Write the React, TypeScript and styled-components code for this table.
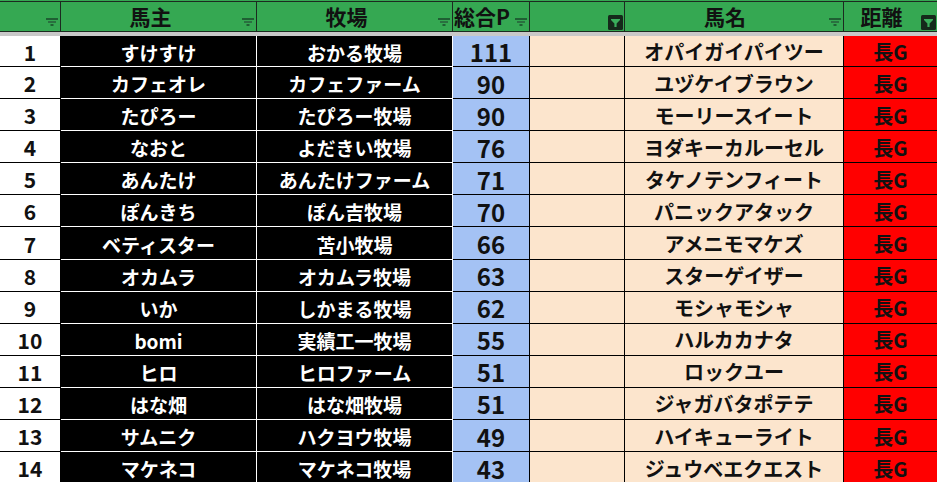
import styled, { createGlobalStyle, css } from "styled-components";

const GlobalStyle = createGlobalStyle`
  html, body {
    margin: 0;
    padding: 0;
    background: #ffffff;
    overflow: hidden;
  }
  body {
    font-family: "Noto Sans CJK JP", "Noto Sans", sans-serif;
  }
`;

type Tone = "num" | "dark" | "blue" | "peach" | "red";

interface RowData {
  owner: string;
  farm: string;
  points: number;
  horse: string;
}

const rows: RowData[] = [
  { owner: "すけすけ", farm: "おかる牧場", points: 111, horse: "オパイガイパイツー" },
  { owner: "カフェオレ", farm: "カフェファーム", points: 90, horse: "ユヅケイブラウン" },
  { owner: "たぴろー", farm: "たぴろー牧場", points: 90, horse: "モーリースイート" },
  { owner: "なおと", farm: "よだきい牧場", points: 76, horse: "ヨダキーカルーセル" },
  { owner: "あんたけ", farm: "あんたけファーム", points: 71, horse: "タケノテンフィート" },
  { owner: "ぽんきち", farm: "ぽん吉牧場", points: 70, horse: "パニックアタック" },
  { owner: "ベティスター", farm: "苫小牧場", points: 66, horse: "アメニモマケズ" },
  { owner: "オカムラ", farm: "オカムラ牧場", points: 63, horse: "スターゲイザー" },
  { owner: "いか", farm: "しかまる牧場", points: 62, horse: "モシャモシャ" },
  { owner: "bomi", farm: "実績工一牧場", points: 55, horse: "ハルカカナタ" },
  { owner: "ヒロ", farm: "ヒロファーム", points: 51, horse: "ロックユー" },
  { owner: "はな畑", farm: "はな畑牧場", points: 51, horse: "ジャガバタポテテ" },
  { owner: "サムニク", farm: "ハクヨウ牧場", points: 49, horse: "ハイキューライト" },
  { owner: "マケネコ", farm: "マケネコ牧場", points: 43, horse: "ジュウベエクエスト" },
];

const COLS = "61px 196px 196px 77px 95px 219px 94px";

const Sheet = styled.div`
  width: 937px;
  height: 482px;
  overflow: hidden;
`;

const HeaderRow = styled.div`
  display: grid;
  grid-template-columns: ${COLS};
  height: 32px;
  border-top: 1px solid #35a852;
  box-sizing: border-box;
`;

const HeaderCell = styled.div<{ $pad?: number }>`
  position: relative;
  box-sizing: border-box;
  background: #35a852;
  border-top: 1px solid #1c2a20;
  border-right: 1px solid #1c2a20;
  border-bottom: 1px solid #1c2a20;
  display: flex;
  align-items: center;
  justify-content: center;
  padding-right: ${(p) => p.$pad ?? 16}px;
  padding-bottom: 1px;
  font-size: 21px;
  line-height: 1;
  font-weight: 700;
  color: #111;
  white-space: nowrap;
`;

const Band = styled.div`
  height: 4px;
  background: #c8c8c8;
`;

const Row = styled.div<{ $first?: boolean }>`
  display: grid;
  grid-template-columns: ${COLS};
  height: ${(p) => (p.$first ? "31px" : "32.1px")};
`;

const toneStyles: Record<Tone, ReturnType<typeof css>> = {
  num: css`
    background: #ffffff;
    color: #111;
    border-color: #000;
    font-size: 21px;
  `,
  dark: css`
    background: #000;
    color: #fff;
    border-color: #fff;
    font-size: 19px;
  `,
  blue: css`
    background: #a4c2f4;
    color: #111;
    border-color: #000;
    font-size: 24px;
  `,
  peach: css`
    background: #fce5cd;
    color: #111;
    border-color: #000;
    font-size: 20px;
  `,
  red: css`
    background: #ff0000;
    color: #111;
    border-color: #000;
    font-size: 20px;
  `,
};

const Cell = styled.div<{ $tone: Tone }>`
  box-sizing: border-box;
  border-right: 1px solid;
  border-bottom: 1px solid;
  display: flex;
  align-items: center;
  justify-content: center;
  padding-top: 2px;
  line-height: 1;
  font-weight: 700;
  white-space: nowrap;
  ${(p) => toneStyles[p.$tone]}
`;

const FilterMark = styled.svg`
  position: absolute;
  right: 2px;
  bottom: 4px;
`;

const ActiveFilter = styled.svg`
  position: absolute;
  right: 1px;
  bottom: 1px;
`;

function Filter() {
  return (
    <FilterMark width="12" height="9" viewBox="0 0 12 9">
      <rect x="0" y="0" width="12" height="2" fill="#1f5f33" />
      <rect x="2" y="3" width="8" height="2" fill="#2a7040" />
      <rect x="4.5" y="6" width="3" height="2" fill="#1f5f33" />
    </FilterMark>
  );
}

function FilterOn() {
  return (
    <ActiveFilter width="15" height="15" viewBox="0 0 15 15">
      <rect x="0" y="0" width="15" height="15" rx="1.5" fill="#15291b" />
      <path d="M3 4 H12 V5 L8.6 8.4 V12 H6.4 V8.4 L3 5 Z" fill="#3aae5c" />
    </ActiveFilter>
  );
}

export default function App() {
  return (
    <>
      <GlobalStyle />
      <Sheet>
        <HeaderRow>
          <HeaderCell>
            <Filter />
          </HeaderCell>
          <HeaderCell>
            馬主
            <Filter />
          </HeaderCell>
          <HeaderCell>
            牧場
            <Filter />
          </HeaderCell>
          <HeaderCell $pad={18}>
            総合P
            <Filter />
          </HeaderCell>
          <HeaderCell>
            <FilterOn />
          </HeaderCell>
          <HeaderCell $pad={18}>
            馬名
            <Filter />
          </HeaderCell>
          <HeaderCell $pad={18}>
            距離
            <FilterOn />
          </HeaderCell>
        </HeaderRow>
        <Band />
        {rows.map((r, i) => (
          <Row key={i} $first={i === 0}>
            <Cell $tone="num">{i + 1}</Cell>
            <Cell $tone="dark">{r.owner}</Cell>
            <Cell $tone="dark">{r.farm}</Cell>
            <Cell $tone="blue">{r.points}</Cell>
            <Cell $tone="peach" />
            <Cell $tone="peach">{r.horse}</Cell>
            <Cell $tone="red">長G</Cell>
          </Row>
        ))}
      </Sheet>
    </>
  );
}
